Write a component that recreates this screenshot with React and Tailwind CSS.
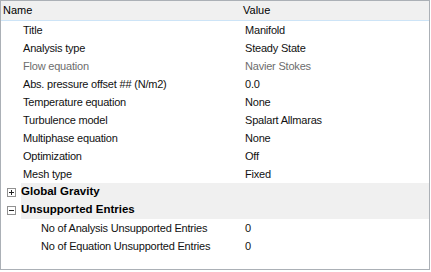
import React from 'react';

const props = [
  { name: 'Title', value: 'Manifold' },
  { name: 'Analysis type', value: 'Steady State' },
  { name: 'Flow equation', value: 'Navier Stokes', disabled: true },
  { name: 'Abs. pressure offset ## (N/m2)', value: '0.0' },
  { name: 'Temperature equation', value: 'None' },
  { name: 'Turbulence model', value: 'Spalart Allmaras' },
  { name: 'Multiphase equation', value: 'None' },
  { name: 'Optimization', value: 'Off' },
  { name: 'Mesh type', value: 'Fixed' },
];

const unsupported = [
  { name: 'No of Analysis Unsupported Entries', value: '0' },
  { name: 'No of Equation Unsupported Entries', value: '0' },
];

function Toggle({ open }) {
  return (
    <span className="w-[9px] h-[9px] border border-[#919191] bg-white flex items-center justify-center relative">
      <span className="absolute w-[5px] h-px bg-[#222]" />
      {!open && <span className="absolute w-px h-[5px] bg-[#222]" />}
    </span>
  );
}

function Row({ name, value, disabled, indent }) {
  return (
    <div className="flex h-[18px] items-center tracking-[-0.2px]">
      <div className={`w-[240px] shrink-0 truncate ${indent} ${disabled ? 'text-[#6d6d6d]' : 'text-[#111]'}`}>{name}</div>
      <div className={`pl-[4px] ${disabled ? 'text-[#6d6d6d]' : 'text-[#111]'}`}>{value}</div>
    </div>
  );
}

function Group({ label, open }) {
  return (
    <div className="flex h-[18px] items-center">
      <div className="w-[20px] shrink-0 flex items-center pl-[6px]">
        <Toggle open={open} />
      </div>
      <div className="flex-1 h-full bg-[#f0f0f0] flex items-center font-bold text-[11.5px] text-black">{label}</div>
    </div>
  );
}

export default function App() {
  return (
    <div className="w-[431px] h-[272px] bg-white" style={{ fontFamily: '"Liberation Sans", Arial, sans-serif' }}>
      <div className="w-[430px] h-[270px] border border-[#abb0b6] text-[11px] leading-none flex flex-col">
        <div className="flex h-[20px] items-center bg-[#f0f0f0] border-b border-[#cde4f7] text-black">
          <div className="w-[240px] pl-[2px]">Name</div>
          <div className="pl-[2px]">Value</div>
        </div>
        {props.map(p => (
          <Row key={p.name} {...p} indent="pl-[22px]" />
        ))}
        <Group label="Global Gravity" />
        <Group label="Unsupported Entries" open />
        {unsupported.map(p => (
          <Row key={p.name} {...p} indent="pl-[40px]" />
        ))}
      </div>
    </div>
  );
}
